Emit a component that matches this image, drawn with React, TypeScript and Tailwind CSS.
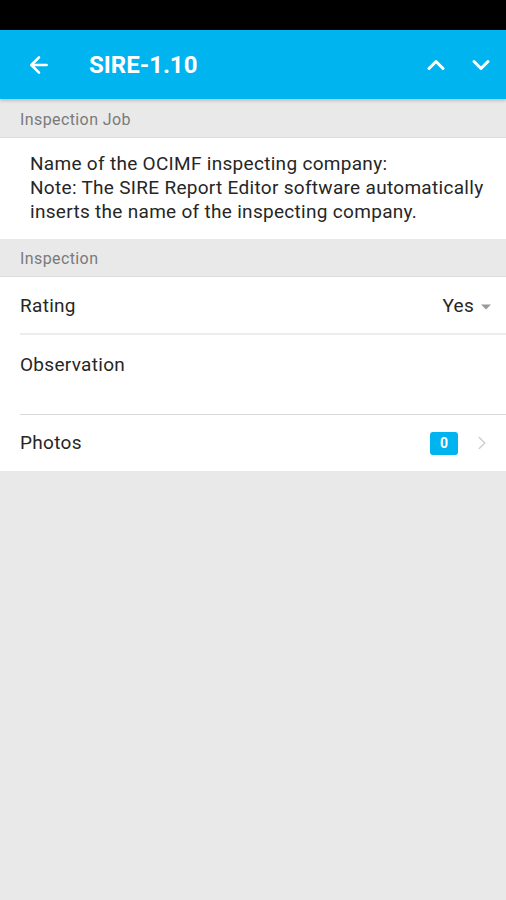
import { ArrowLeft, ChevronUp, ChevronDown, ChevronRight } from "lucide-react";

export default function App() {
  return (
    <div className="min-h-[900px] bg-[#e9e9e9] font-['Roboto',sans-serif]">
      {/* Status bar */}
      <div className="h-[30px] bg-black" />

      {/* Toolbar */}
      <header className="relative z-10 h-[69px] bg-[#00b4ef] flex items-center shadow-[0_2px_3px_rgba(0,0,0,0.18)]">
        <ArrowLeft className="ml-[26px] text-white" size={26} strokeWidth={2.4} />
        <h1 className="ml-[37px] text-white text-[24px] font-bold">SIRE-1.10</h1>
        <div className="ml-auto flex items-center gap-[17px] pr-[11px]">
          <ChevronUp className="text-white" size={28} strokeWidth={2.6} />
          <ChevronDown className="text-white" size={28} strokeWidth={2.6} />
        </div>
      </header>

      {/* Inspection Job */}
      <div className="h-[39px] flex items-center pt-[3px] px-[20px] text-[16px] tracking-[0.4px] text-[#7a7a7a] border-b border-[#dcdcdc]">
        Inspection Job
      </div>
      <div className="bg-white pl-[30px] pr-[6px] pt-[14px] pb-[15px] text-[19px] leading-[24px] tracking-[0.3px] text-[#262626]">
        Name of the OCIMF inspecting company:
        <br />
        Note: The SIRE Report Editor software automatically inserts the name of the inspecting company.
      </div>

      {/* Inspection */}
      <div className="h-[38px] flex items-center pt-[2px] px-[20px] text-[16px] tracking-[0.4px] text-[#7a7a7a] border-b border-[#dcdcdc]">
        Inspection
      </div>
      <div className="bg-white text-[19px] tracking-[0.3px] text-[#262626]">
        <div className="h-[56px] flex items-center pt-[3px] pl-[20px] pr-[14px]">
          <span>Rating</span>
          <span className="ml-auto">Yes</span>
          <svg width="12" height="8" viewBox="0 0 12 8" className="ml-[6px] mt-[1px]">
            <path d="M1 1.5 L11 1.5 L6 6.5 Z" fill="#9a9a9a" />
          </svg>
        </div>
        <div className="ml-[20px] border-t-[2px] border-[#ececec]" />
        <div className="h-[79px] pl-[20px] pt-[16px]">Observation</div>
        <div className="ml-[20px] border-t border-[#d8d8d8]" />
        <div className="h-[56px] flex items-center pl-[20px] pr-[13px]">
          <span>Photos</span>
          <span className="ml-auto w-[28px] h-[23px] rounded-[3px] bg-[#00b4ef] text-white text-[14px] tracking-normal font-bold flex items-center justify-center">
            0
          </span>
          <ChevronRight className="ml-[13px] text-[#cfcfcf]" size={22} strokeWidth={1.6} />
        </div>
      </div>
    </div>
  );
}
